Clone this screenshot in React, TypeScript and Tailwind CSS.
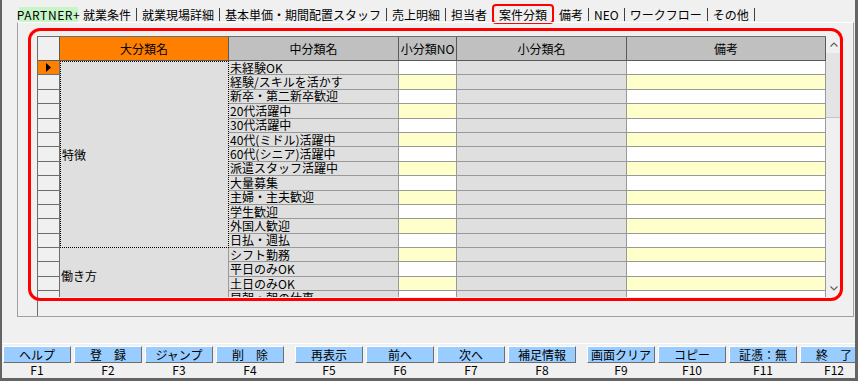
const TABS = ["就業条件", "就業現場詳細", "基本単価・期間配置スタッフ", "売上明細", "担当者", "案件分類", "備考", "NEO", "ワークフロー", "その他"];

const MID = [
  "未経験OK",
  "経験/スキルを活かす",
  "新卒・第二新卒歓迎",
  "20代活躍中",
  "30代活躍中",
  "40代(ミドル)活躍中",
  "60代(シニア)活躍中",
  "派遣スタッフ活躍中",
  "大量募集",
  "主婦・主夫歓迎",
  "学生歓迎",
  "外国人歓迎",
  "日払・週払",
  "シフト勤務",
  "平日のみOK",
  "土日のみOK",
  "早朝・朝の仕事",
];

const BUTTONS = [
  ["ヘルプ", "登　録", "ジャンプ", "削　除"],
  ["再表示", "前へ", "次へ", "補足情報"],
  ["画面クリア", "コピー", "証憑：無", "終　了"],
];

function Tabs() {
  return (
    <div className="ml-[17px] mt-[7px] flex h-[15px] items-center leading-[15px]">
      <div className="flex h-[15px] w-[59px] items-center justify-center bg-[#c6f6c6] tracking-[0.6px]">PARTNER+</div>
      {TABS.map((t) => {
        const active = t === "案件分類";
        return (
          <div key={t} className="flex items-center">
            <span className={active ? "relative px-[6px]" : "px-[5px]"}>
              {t}
              {active && (
                <span className="pointer-events-none absolute -left-[1px] -right-[1px] -top-[3px] -bottom-[2px] rounded-[4px] border-2 border-[#f00]" />
              )}
            </span>
            <span className="h-[13px] w-px bg-[#404040]" />
          </div>
        );
      })}
    </div>
  );
}

const COLS = "grid grid-cols-[22px_169px_170px_58px_170px_199px]";

function Grid() {
  return (
    <div className="w-[789px] border-l border-t border-[#6d6d6d]">
      <div className={`${COLS} h-[24px]`}>
        <div className="border-b border-r border-[#5a5a5a] bg-[#f0f0f0]" />
        <div className="flex items-center justify-center border-b border-r border-[#5a5a5a] bg-[#ff8000]">大分類名</div>
        <div className="flex items-center justify-center border-b border-r border-[#5a5a5a] bg-[#c0c0c0]">中分類名</div>
        <div className="flex items-center justify-center border-b border-r border-[#5a5a5a] bg-[#c0c0c0]">小分類NO</div>
        <div className="flex items-center justify-center border-b border-r border-[#5a5a5a] bg-[#c0c0c0]">小分類名</div>
        <div className="flex items-center justify-center border-b border-r border-[#5a5a5a] bg-[#c0c0c0]">備考</div>
      </div>
      <div className="h-[236px] overflow-hidden">
        <div className={`${COLS} auto-rows-[14.4px]`}>
          <div className="col-start-2 row-[1/span_13] flex items-center border border-dotted border-black bg-[#dfdfdf] pl-px">特徴</div>
          <div className="col-start-2 row-[14/span_4] flex items-center border-b border-r border-[#999] bg-[#dfdfdf] pl-px">働き方</div>
          {MID.map((m, i) => {
            const fill = i % 2 === 0 ? "bg-white" : "bg-[#ffffcc]";
            return [
              <div
                key={`h${i}`}
                className={`flex items-center border-b border-r border-[#6d6d6d] pl-[8px] ${i === 0 ? "bg-[#ff8000]" : "bg-[#f0f0f0]"}`}
              >
                {i === 0 && (
                  <svg width="5" height="9" viewBox="0 0 5 9">
                    <polygon points="0,0 5,4.5 0,9" fill="#000" />
                  </svg>
                )}
              </div>,
              <div key={`m${i}`} className="flex items-center border-b border-r border-[#999] bg-[#dfdfdf] pl-px leading-[12px]">
                {m}
              </div>,
              <div key={`n${i}`} className={`border-b border-r border-[#999] ${fill}`} />,
              <div key={`s${i}`} className="border-b border-r border-[#999] bg-[#dfdfdf]" />,
              <div key={`b${i}`} className={`border-b border-r border-[#999] ${fill}`} />,
            ];
          })}
        </div>
      </div>
    </div>
  );
}

function Scrollbar() {
  return (
    <div className="flex h-[261px] w-[16px] flex-col bg-[#f0f0f0]">
      <div className="flex h-[17px] items-center justify-center">
        <svg width="8" height="5" viewBox="0 0 8 5">
          <polyline points="0.5,4.5 4,1 7.5,4.5" fill="none" stroke="#606060" strokeWidth="1.2" />
        </svg>
      </div>
      <div className="h-[65px] border-b border-[#c4c4c4] bg-[#e4e4e4]" />
      <div className="flex-1" />
      <div className="flex h-[17px] items-center justify-center">
        <svg width="8" height="5" viewBox="0 0 8 5">
          <polyline points="0.5,0.5 4,4 7.5,0.5" fill="none" stroke="#606060" strokeWidth="1.2" />
        </svg>
      </div>
    </div>
  );
}

function Buttons() {
  let n = 0;
  return (
    <div className="ml-[1px] flex gap-[11px]">
      {BUTTONS.map((group, g) => (
        <div key={g} className="flex gap-[3px]">
          {group.map((label) => {
            n += 1;
            return (
              <div key={label} className="flex w-[68px] shrink-0 flex-col">
                <div className="flex h-[17px] items-center justify-center border border-b-[#6d6d6d] border-l-white border-r-[#6d6d6d] border-t-white bg-[#99ccff] leading-none">
                  {label}
                </div>
                <div className="h-[14px] text-center leading-[14px]">F{n}</div>
              </div>
            );
          })}
        </div>
      ))}
    </div>
  );
}

export default function App() {
  return (
    <div className="h-[381px] w-[858px] overflow-hidden border-b-[3px] border-l-2 border-r-[3px] border-[#646464] bg-[#f0f0f0] font-['Noto_Sans_CJK_JP',sans-serif] text-[12px] text-black">
      <Tabs />
      <div className="relative ml-[15px] flex h-[295px] w-[837px] border border-[#a0a0a0] border-t-white pl-[19px] pt-[13px]">
        <Grid />
        <Scrollbar />
        <div className="pointer-events-none absolute left-[10px] top-[5px] h-[273px] w-[815px] rounded-[12px] border-[3px] border-[#f00]" />
      </div>
      <div className="mt-[26px] h-px bg-white" />
      <div className="mt-[2px] overflow-hidden">
        <Buttons />
      </div>
    </div>
  );
}
